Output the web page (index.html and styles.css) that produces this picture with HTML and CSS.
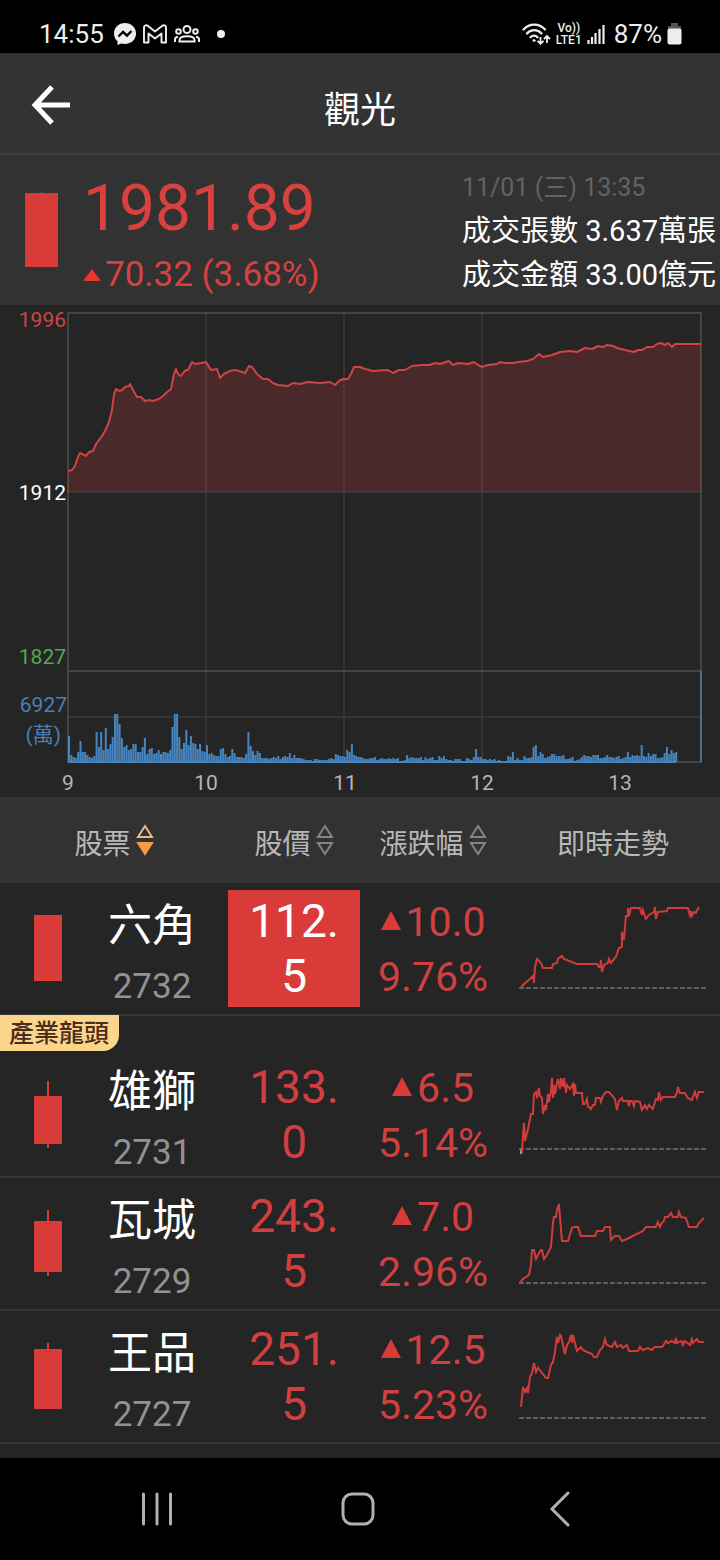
FILE: index.html
```html
<!DOCTYPE html>
<html lang="zh-Hant">
<head>
    <meta charset="UTF-8">
    <meta name="viewport" content="width=device-width, initial-scale=1.0">
    <title>觀光</title>
    <link rel="stylesheet" href="styles.css">
</head>
<body>
    <div class="status-bar">
        <span class="clock">14:55</span>
        <div class="status-left">
            <svg width="22" height="22" viewBox="0 0 22 22">
                <path fill="#eee" d="M11 0C4.800 0 0 4.500 0 10.500c0 3.200 1.300 5.900 3.500 7.800V22l3.600-1.600c1.200.3 2.500.5 3.900.5 6.200 0 11-4.500 11-10.400S17.200 0 11 0z"/>
                <path fill="none" stroke="#000" stroke-width="2.400" d="M4.500 13.500 9 9l4 3.500 4.500-4.500"/>
            </svg>
            <svg width="24" height="20" viewBox="0 0 24 20">
                <path fill="none" stroke="#eee" stroke-width="1.900" stroke-linejoin="round" d="M1 3.500C1 1 3.500.8 5 2L12 7.500 19 2c1.500-1.200 4-1 4 1.500V18.500h-4.500V9.500L12 14.500l-6.500-5v9H1z"/>
            </svg>
            <svg width="26" height="18" viewBox="0 0 26 18" fill="none" stroke="#eee" stroke-width="2">
                <circle cx="13" cy="4.500" r="3.500"/>
                <circle cx="4.500" cy="6.500" r="2.300"/>
                <circle cx="21.500" cy="6.500" r="2.300"/>
                <path d="M5.500 16.500v-1.500c0-5 15-5 15 0v1.500zM1 17v-2.500c0-1.500 1-2.500 3-2.800M25 17v-2.500c0-1.500-1-2.500-3-2.800"/>
            </svg>
            <span class="dot"></span>
        </div>
        <div class="status-right">
            <svg width="29" height="22" viewBox="0 0 29 22" fill="none" stroke="#eee" stroke-width="2.300" stroke-linecap="round">
                <path d="M1.500 6.500c6-6.500 15.500-6.500 21.500 0M5 10.500c4-4.500 10.500-4.500 14.500 0M8.500 14.200c2-2.200 5-2.200 7 0"/>
                <circle cx="12" cy="17.500" r="1" fill="#eee" stroke-width="1"/>
                <path stroke-width="1.800" stroke-linecap="butt" d="M18.500 14v7M15.500 17.800l3 3 3-3M25 20v-7M22 16l3-3 3 3"/>
            </svg>
            <span class="volte"><span>Vo))</span><span>LTE1</span></span>
            <svg width="18" height="20" viewBox="0 0 18 20" stroke="#eee" stroke-width="2.200">
                <path d="M1.500 20v-4M5 20v-7M8.500 20V9M12.500 20V5"/>
                <path d="M16.500 20V1"/>
            </svg>
            <span class="battery-level">87%</span>
            <svg width="15" height="22" viewBox="0 0 15 22">
                <path fill="#555" d="M4 0h7v3h3v4H1V3h3z"/>
                <rect x="0.500" y="5.500" width="14" height="16" rx="2" fill="#eee"/>
            </svg>
        </div>
    </div>

    <header class="title-bar">
        <button class="back" type="button" aria-label="返回">
            <svg width="40" height="40" viewBox="0 0 40 40" fill="none" stroke="#fff" stroke-width="5">
                <path d="M21 2 4 20l17 18M4 20h35"/>
            </svg>
        </button>
        <h1>觀光</h1>
    </header>

    <section class="summary">
        <svg class="index-candle" width="33" height="75" viewBox="0 0 33 75" fill="#d93b39">
            <rect y="1" width="33" height="74"/>
            <rect x="16" width="1" height="2"/>
        </svg>
        <div class="index">
            <div class="index-value">1981.89</div>
            <div class="index-change">
                <svg width="18" height="12" viewBox="0 0 18 12"><path fill="#e8392a" d="M9 0l9 12H0z"/></svg>
                <span>70.32 (3.68%)</span>
            </div>
        </div>
        <div class="turnover">
            <div class="time">11/01 (三) 13:35</div>
            <div>成交張數 3.637萬張</div>
            <div>成交金額 33.00億元</div>
        </div>
    </section>

    <svg class="chart" viewBox="0 0 720 492">
        <path class="area" d="M68 187V166L72 165 75 161 78 152 80 148 82 149 86 151 89 147 93 146 96 139 102 131 105 126 109 117 112 105 114 89 116 84 119 86 122 85 125 82 129 81 130 79 133 85 137 92 141 92 145 96 149 95 153 96 159 94 163 91 166 88 171 84 172 79 174 69 176 64 178 69 181 71 183 68 186 65 188 65 192 57 195 59 201 58 206 57 211 65 217 64 220 73 224 69 230 66 235 65 239 66 245 68 249 61 252 62 257 69 263 74 268 74 273 78 278 80 288 81 293 78 300 79 308 77 320 78 330 77 335 80 339 76 343 74 348 74 351 69 354 62 357 62 360 62 365 64 373 66 388 65 393 68 399 65 405 65 412 61 422 60 430 60 435 58 440 59 449 56 453 60 458 58 468 59 474 57 478 60 482 62 488 60 497 59 500 57 505 58 513 58 518 57 527 56 533 54 539 49 543 52 552 50 560 47 570 46 577 47 585 43 592 44 598 41 603 42 607 40 613 41 617 43 625 45 634 47 638 45 642 45 647 42 653 42 657 39 661 38 665 40 668 38 672 42 675 39H701V187z"/>
        <g class="grid">
            <path d="M206 8V457M344 8V457M482 8V457M68 187H701M68 412H701"/>
            <path class="frame" d="M68 8H701V457H68zM68 366H701"/>
        </g>
        <path class="line" d="M68 166L72 165 75 161 78 152 80 148 82 149 86 151 89 147 93 146 96 139 102 131 105 126 109 117 112 105 114 89 116 84 119 86 122 85 125 82 129 81 130 79 133 85 137 92 141 92 145 96 149 95 153 96 159 94 163 91 166 88 171 84 172 79 174 69 176 64 178 69 181 71 183 68 186 65 188 65 192 57 195 59 201 58 206 57 211 65 217 64 220 73 224 69 230 66 235 65 239 66 245 68 249 61 252 62 257 69 263 74 268 74 273 78 278 80 288 81 293 78 300 79 308 77 320 78 330 77 335 80 339 76 343 74 348 74 351 69 354 62 357 62 360 62 365 64 373 66 388 65 393 68 399 65 405 65 412 61 422 60 430 60 435 58 440 59 449 56 453 60 458 58 468 59 474 57 478 60 482 62 488 60 497 59 500 57 505 58 513 58 518 57 527 56 533 54 539 49 543 52 552 50 560 47 570 46 577 47 585 43 592 44 598 41 603 42 607 40 613 41 617 43 625 45 634 47 638 45 642 45 647 42 653 42 657 39 661 38 665 40 668 38 672 42 675 39H701"/>
        <path class="volume-base" d="M68 457H676"/>
        <path class="volume-edge" d="M701 366V457"/>
        <path class="volume" id="volume"/>
        <g class="y-labels">
            <text class="high" x="66" y="22">1996</text>
            <text class="open" x="66" y="195">1912</text>
            <text class="low" x="66" y="359">1827</text>
            <text class="vol" x="67" y="407">6927</text>
            <text class="vol" x="61" y="437">(萬)</text>
        </g>
        <g class="x-labels">
            <text x="68" y="485">9</text>
            <text x="206" y="485">10</text>
            <text x="345" y="485">11</text>
            <text x="482" y="485">12</text>
            <text x="620" y="485">13</text>
        </g>
    </svg>

    <table class="stocks">
        <colgroup>
            <col class="col-candle">
            <col class="col-name">
            <col class="col-price">
            <col class="col-change">
            <col class="col-trend">
        </colgroup>
        <thead>
            <tr>
                <th colspan="2">
                    <button class="sort active" type="button"><span>股票</span>
                        <svg width="18" height="34" viewBox="0 0 18 34"><path d="M9 3l7 11H2z"/><path class="down" d="M9 31l7-11H2z"/></svg>
                    </button>
                </th>
                <th>
                    <button class="sort" type="button"><span>股價</span>
                        <svg width="18" height="34" viewBox="0 0 18 34"><path d="M9 3l7 11H2z"/><path class="down" d="M9 31l7-11H2z"/></svg>
                    </button>
                </th>
                <th>
                    <button class="sort" type="button"><span>漲跌幅</span>
                        <svg width="18" height="34" viewBox="0 0 18 34"><path d="M9 3l7 11H2z"/><path class="down" d="M9 31l7-11H2z"/></svg>
                    </button>
                </th>
                <th><span>即時走勢</span></th>
            </tr>
        </thead>
        <tbody>
            <tr>
                <td>
                    <svg class="candle" width="28" height="117" viewBox="0 0 28 117"><rect y="25" width="28" height="66"/></svg>
                </td>
                <td class="stock">
                    <div class="name">六角</div>
                    <div class="code">2732</div>
                </td>
                <td><div class="price limit-up">112.5</div></td>
                <td class="change">
                    <div><svg width="20" height="24" viewBox="0 0 20 24"><path d="M10 0l10 19H0z"/></svg>10.0</div>
                    <div>9.76%</div>
                </td>
                <td class="trend">
                    <svg viewBox="0 0 188 117">
                        <path class="base" d="M0 98H188"/>
                        <path d="M2 97L14 86 15 93 16 77 18 69 22 73 24 78H33L34 74 38 73 39 69 43 66 45 69 58 74H78L80 77 81 77 82 70 83 82 85 75 89 73 90 69 92 73 97 67 100 58 103 57 103 42 105 50 107 26 109 26 109 18 110 26 112 18H121L123 25 124 20 127 29 130 25 135 22 136 17 137 29 139 22 148 21 149 18H169L171 25 172 21 173 26 175 22 177 23 180 17"/>
                    </svg>
                </td>
            </tr>
            <tr class="leader">
                <td>
                    <span class="tag">產業龍頭</span>
                    <svg class="candle" width="28" height="117" viewBox="0 0 28 117"><rect y="40" width="28" height="48"/><rect x="13" y="25" width="2" height="67"/></svg>
                </td>
                <td class="stock">
                    <div class="name">雄獅</div>
                    <div class="code">2731</div>
                </td>
                <td><div class="price">133.0</div></td>
                <td class="change">
                    <div><svg width="20" height="24" viewBox="0 0 20 24"><path d="M10 0l10 19H0z"/></svg>6.5</div>
                    <div>5.14%</div>
                </td>
                <td class="trend">
                    <svg viewBox="0 0 188 117">
                        <path class="base" d="M0 93H188"/>
                        <path class="below" d="M2 92V98L3 93"/>
                        <path d="M2 92L3 94 4 80 5 67 6 85 9 73 12 58 14 58 15 38 17 36 18 42 20 32 21 40 23 42 24 58 26 49 27 54 29 38 30 46 32 35 33 22 34 42 35 29 36 38 38 27 39 23 41 33 42 22 44 31 45 22 47 37 48 29 51 33 54 28 55 40 56 28 57 37H63L64 48 66 48 68 43 69 50 72 53 74 49 76 49 77 42 81 42 82 46 84 40 87 36H90L96 43 98 54 100 45 103 42 104 45H109L110 50 111 45 113 45 115 50 116 45 121 46 123 54 126 49 128 53 130 49 134 53 137 43 139 44 140 36 142 44 144 41H156L158 37 159 31 161 37 166 37 169 42 173 44 174 41 176 36 178 42 180 36H185"/>
                    </svg>
                </td>
            </tr>
            <tr>
                <td>
                    <svg class="candle" width="28" height="117" viewBox="0 0 28 117"><rect y="36" width="28" height="51"/><rect x="13" y="25" width="2" height="66"/></svg>
                </td>
                <td class="stock">
                    <div class="name">瓦城</div>
                    <div class="code">2729</div>
                </td>
                <td><div class="price">243.5</div></td>
                <td class="change">
                    <div><svg width="20" height="24" viewBox="0 0 20 24"><path d="M10 0l10 19H0z"/></svg>7.0</div>
                    <div>2.96%</div>
                </td>
                <td class="trend">
                    <svg viewBox="0 0 188 117">
                        <path class="base" d="M0 98H188"/>
                        <path d="M1 98L4 94 10 90 12 80 13 65H15L17 74 20 68 22 65 23 65 25 74 28 70 32 62 34 38 35 32 37 32 38 25 40 19 41 32 43 56H49L53 43 55 42H59L62 51H76L78 46H84L86 42H91L92 55 96 51H100L103 56 108 54 124 46 127 42H137L139 37 141 42 143 38 145 36 146 32 149 32 152 28 154 32H159L160 27 162 32 167 33 170 42H178L180 38 185 33"/>
                    </svg>
                </td>
            </tr>
            <tr>
                <td>
                    <svg class="candle" width="28" height="117" viewBox="0 0 28 117"><rect y="31" width="28" height="60"/><rect x="13" y="25" width="2" height="10"/></svg>
                </td>
                <td class="stock">
                    <div class="name">王品</div>
                    <div class="code">2727</div>
                </td>
                <td><div class="price">251.5</div></td>
                <td class="change">
                    <div><svg width="20" height="24" viewBox="0 0 20 24"><path d="M10 0l10 19H0z"/></svg>12.5</div>
                    <div>5.23%</div>
                </td>
                <td class="trend">
                    <svg viewBox="0 0 188 117">
                        <path class="base" d="M0 100H188"/>
                        <path d="M2 89L4 69 6 74 8 70 9 75 11 59 13 55 15 45 17 54 19 50 23 55 27 60 29 60 32 47 34 44 36 34 38 19 39 25 41 17 42 18 44 27 46 36 48 27 50 24 52 17 53 25 54 17 56 25 58 33 62 29 64 32 68 34 73 36 75 39H78L81 32 84 29 86 21 88 27 93 29 96 24 98 29 102 27 104 30 108 27 110 33H119L121 29 124 32 129 30 133 32 136 29H143L146 25 147 23 149 25 153 23 156 25 157 20 158 25 163 23 164 27 166 23 171 27 173 21 174 25 178 21 180 24H185"/>
                    </svg>
                </td>
            </tr>
        </tbody>
    </table>

    <nav class="system-nav">
        <button type="button" aria-label="最近使用">
            <svg width="40" height="40" viewBox="0 0 40 40"><path d="M6.500 5v30M20 5v30M33.500 5v30"/></svg>
        </button>
        <button type="button" aria-label="主畫面">
            <svg width="40" height="40" viewBox="0 0 40 40"><rect x="5" y="5" width="30" height="30" rx="9"/></svg>
        </button>
        <button type="button" aria-label="返回">
            <svg width="40" height="40" viewBox="0 0 40 40"><path d="M28 4 12 20l16 16"/></svg>
        </button>
    </nav>

    <script src="script.js"></script>
</body>
</html>
```
FILE: styles.css
```css
body {
    margin: 0;
    min-height: 100vh;
    display: flex;
    flex-direction: column;
    background-color: #252525;
    color: #fff;
    font-family: Roboto, "Noto Sans CJK TC", sans-serif;
}
h1 {
    margin: 0;
    padding-top: 4px;
    font-size: 36px;
    font-weight: 400;
    text-align: center;
}
button {
    padding: 0;
    border: 0;
    background: none;
    color: inherit;
    font: inherit;
}
svg {
    display: block;
}

/* phone status bar */
.status-bar {
    display: flex;
    align-items: center;
    height: 38px;
    padding: 15px 38px 0 39px;
    background-color: #000;
    color: #eee;
    font-size: 26px;
}
.status-left {
    display: flex;
    align-items: center;
    gap: 7px;
    margin-left: 10px;
}
.dot {
    width: 8px;
    height: 8px;
    margin-left: 10px;
    border-radius: 50%;
    background-color: #eee;
}
.status-right {
    display: flex;
    align-items: center;
    gap: 5px;
    margin-left: auto;
}
.volte {
    display: flex;
    flex-direction: column;
    align-items: center;
    font-size: 12px;
    font-weight: 500;
    line-height: 12px;
}
.battery-level {
    margin-left: 4px;
}

/* title */
.title-bar {
    display: grid;
    grid-template-columns: 102px 1fr 102px;
    align-items: center;
    height: 97px;
    padding-top: 3px;
    border-bottom: 2px solid #404040;
    background-color: #333;
}
.back {
    justify-self: center;
}

/* index summary */
.summary {
    display: flex;
    height: 150px;
    background-color: #323232;
}
.index-candle {
    margin: 37px 0 0 25px;
}
.index {
    margin: 15px 0 0 25px;
    color: #d8413f;
}
.index-value {
    font-size: 64px;
    line-height: 78px;
}
.index-change {
    display: flex;
    align-items: center;
    gap: 4px;
    font-size: 35px;
    line-height: 54px;
}
.turnover {
    margin: 10px 4px 0 auto;
    font-size: 29px;
    line-height: 44px;
}
.time {
    padding-top: 2px;
    color: #636363;
    font-size: 25px;
    line-height: 42px;
}

/* intraday chart */
.chart {
    width: 100%;
}
.chart text {
    font-size: 21px;
}
.area {
    fill: #4a292b;
}
.grid path {
    fill: none;
    stroke: #fff;
    stroke-opacity: 0.07;
    stroke-width: 2;
}
.grid .frame {
    stroke-opacity: 0.15;
}
.line {
    fill: none;
    stroke: #cf4444;
    stroke-width: 2;
    stroke-linejoin: round;
}
.volume,
.volume-base,
.volume-edge {
    fill: none;
    stroke: #4585c0;
    stroke-width: 2;
}
.volume-edge {
    stroke: #4a6f94;
}
.y-labels {
    text-anchor: end;
}
.high {
    fill: #d04545;
}
.open {
    fill: #fff;
}
.low {
    fill: #55a84f;
}
.vol {
    fill: #4a80b4;
}
.x-labels {
    fill: #b5b5b5;
    text-anchor: middle;
}

/* stock list */
.stocks {
    width: 100%;
    table-layout: fixed;
    border-collapse: collapse;
}
.col-candle {
    width: 13.3%;
}
.col-name {
    width: 18.4%;
}
.col-price {
    width: 18.3%;
}
.col-change {
    width: 20.3%;
}
.col-trend {
    width: 29.7%;
}
.stocks th {
    height: 86px;
    padding: 0;
    background-color: #323232;
    color: #b8b8b8;
    font-size: 28px;
    font-weight: 400;
}
.stocks th span {
    display: block;
    padding-top: 4px;
}
.sort {
    display: flex;
    align-items: center;
    gap: 5px;
    margin: 0 auto;
}
.sort path {
    fill: none;
    stroke: #858585;
    stroke-width: 2;
}
.active path {
    stroke: #e8b98c;
}
.active .down {
    fill: #f59a47;
    stroke: #f59a47;
}
.stocks tbody tr {
    position: relative;
    border-bottom: 2px solid #363636;
}
.stocks td {
    padding: 7px 0;
    vertical-align: top;
}
.stocks .leader td {
    padding-top: 40px;
    padding-bottom: 3px;
}
.candle {
    margin: 0 auto;
    fill: #d93b39;
}
.stock {
    text-align: center;
}
.name {
    margin-right: 20px;
    font-size: 44px;
    line-height: 73px;
}
.code {
    margin-right: 20px;
    padding-top: 4px;
    color: #929292;
    font-size: 35px;
    line-height: 40px;
}
.price {
    padding: 4px 12px 3px;
    color: #d04040;
    font-size: 46px;
    line-height: 55px;
    text-align: center;
    overflow-wrap: anywhere;
}
.limit-up {
    background-color: #d93b39;
    color: #fff;
}
.change {
    color: #d04040;
    font-size: 41px;
    line-height: 55px;
}
.change div {
    display: flex;
    align-items: center;
    justify-content: center;
    gap: 5px;
}
.change div:first-child {
    padding-top: 5px;
}
.change path {
    fill: #d93b39;
}
.stocks .trend {
    padding-left: 13px;
    padding-right: 13px;
}
.trend path {
    fill: none;
    stroke: #d03c3c;
    stroke-width: 2;
}
.trend .base {
    stroke: #606060;
    stroke-dasharray: 5 2;
}
.trend .below {
    stroke: #7fa07a;
}
.tag {
    position: absolute;
    top: 0;
    left: 0;
    padding: 2px 10px 0 9px;
    border-radius: 0 0 16px 0;
    background-color: #fad68a;
    color: #4d2c20;
    font-size: 25px;
    font-weight: 500;
    line-height: 34px;
}

/* phone navigation */
.system-nav {
    display: flex;
    align-items: center;
    justify-content: space-between;
    height: 102px;
    margin-top: auto;
    padding: 0 19.5% 0 19%;
    background-color: #000;
}
.system-nav path,
.system-nav rect {
    fill: none;
    stroke: #b0b0b0;
    stroke-width: 3;
    stroke-linecap: round;
}
```
FILE: script.js
```js
// one bar per minute from 9:00
const volumes = [
    26, 7, 5, 4, 10, 21, 10, 10, 7, 5, 4, 6, 30, 15, 30, 12, 34, 13, 18, 25,
    48, 48, 38, 24, 15, 17, 12, 13, 18, 18, 10, 10, 15, 24, 8, 13, 14, 8, 9, 12,
    8, 10, 10, 9, 12, 35, 48, 48, 25, 13, 19, 32, 17, 26, 19, 18, 13, 18, 11, 10,
    17, 8, 9, 7, 6, 6, 13, 14, 8, 5, 6, 13, 9, 5, 5, 5, 4, 8, 30, 16,
    11, 7, 11, 9, 4, 4, 4, 3, 4, 5, 4, 6, 3, 5, 6, 5, 9, 4, 7, 4,
    4, 4, 3, 2, 2, 2, 1, 3, 3, 2, 2, 2, 2, 3, 4, 3, 8, 7, 6, 6,
    5, 12, 10, 18, 7, 6, 5, 5, 4, 3, 3, 4, 4, 5, 2, 3, 4, 3, 3, 4,
    3, 4, 3, 4, 1, 1, 2, 7, 4, 5, 4, 4, 4, 5, 2, 5, 3, 4, 5, 2,
    2, 6, 4, 6, 3, 2, 2, 1, 3, 3, 3, 1, 1, 4, 3, 2, 5, 13, 5, 5,
    3, 3, 2, 3, 2, 3, 1, 2, 1, 1, 1, 6, 5, 10, 2, 4, 2, 2, 6, 4,
    4, 5, 15, 17, 6, 10, 8, 4, 5, 6, 8, 8, 6, 6, 6, 7, 3, 3, 4, 5,
    1, 2, 3, 5, 7, 6, 6, 5, 7, 7, 7, 4, 4, 5, 7, 5, 5, 4,
    5, 6, 3, 4, 5, 10, 5, 7, 6, 7, 6, 17, 6, 5, 9, 6, 8, 8, 4, 4,
    5, 9, 15, 8, 12, 9, 10
];

const left = 69;
const step = 2.3;
const bars = volumes.map((height, i) => `M${left + i * step} 457v-${height}`);
document.getElementById('volume').setAttribute('d', bars.join(''));
```
